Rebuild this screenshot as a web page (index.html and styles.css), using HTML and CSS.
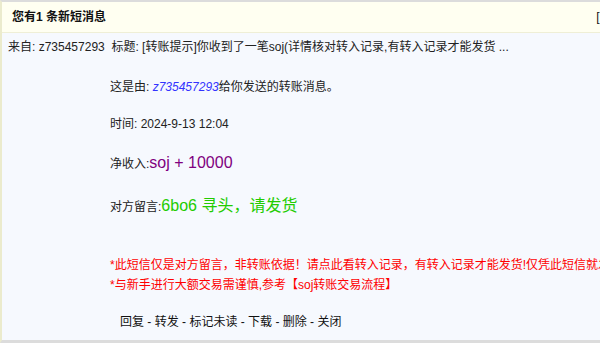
FILE: index.html
```html
<!DOCTYPE html>
<html lang="zh-CN">
<head>
  <meta charset="UTF-8">
  <title>短消息</title>
  <link rel="stylesheet" href="styles.css">
</head>
<body>
  <div class="msgbox">
    <div class="msg-head">
      <span class="msg-title">您有1 条新短消息</span>
      <a class="msg-close" href="#">[关闭]</a>
    </div>

    <div class="msg-from">来自: z735457293&nbsp;&nbsp;标题: [转账提示]你收到了一笔soj(详情核对转入记录,有转入记录才能发货 ...</div>

    <div class="msg-body">
      <div class="line l-first">这是由: <a class="user" href="#">z735457293</a>给你发送的转账消息。</div>
      <div class="line l-time">时间: 2024-9-13 12:04</div>
      <div class="line l-amount">净收入:<span class="amount">soj + 10000</span></div>
      <div class="line l-note">对方留言:<span class="note">6bo6 寻头，请发货</span></div>

      <div class="warn">
        <div class="line">*此短信仅是对方留言，非转账依据！请点此看转入记录，有转入记录才能发货!仅凭此短信就发货后果自负</div>
        <div class="line">*与新手进行大额交易需谨慎,参考<a href="#">【soj转账交易流程】</a></div>
      </div>

      <div class="line actions">
        <a href="#">回复</a> - <a href="#">转发</a> - <a href="#">标记未读</a> - <a href="#">下载</a> - <a href="#">删除</a> - <a href="#">关闭</a>
      </div>
    </div>
  </div>
</body>
</html>
```

FILE: styles.css
```css
html, body {
  margin: 0;
  padding: 0;
  overflow: hidden;
  background-color: #ffffff;
}

body {
  font-family: "Liberation Sans", Arial, "Noto Sans CJK SC", sans-serif;
  font-size: 12px;
  color: #222;
}

a {
  color: inherit;
  text-decoration: none;
}

.msgbox {
  width: 680px;
  height: 338px;
  border-top: 2px solid #dcdcdc;
  border-bottom: 3px solid #dcdcdc;
  border-left: 2px solid #ebebcd;
  background-color: #f6f9fe;
}

.msg-head {
  display: flex;
  justify-content: space-between;
  height: 30px;
  line-height: 30px;
  padding: 0 0 0 10px;
  background-color: #fffff1;
  border-bottom: 1px solid #efefd6;
}

.msg-title {
  font-weight: bold;
  color: #111;
}

.msg-close {
  margin-right: 55px;
  color: #111;
}

.msg-from {
  line-height: 20px;
  padding: 4px 0 0 6px;
  white-space: nowrap;
}

.msg-body {
  padding-left: 108px;
}

.line {
  line-height: 20px;
  white-space: nowrap;
}

.l-first {
  margin-top: 20px;
}

.l-time {
  margin-top: 17px;
}

.l-amount {
  margin-top: 19px;
}

.l-note {
  margin-top: 22px;
}

.user {
  color: #3333ff;
  font-style: italic;
}

.amount {
  font-size: 16px;
  color: #800080;
}

.note {
  font-size: 16px;
  color: #22cc00;
}

.warn {
  margin-top: 38px;
  color: #ff0000;
}

.actions {
  margin-top: 17px;
  padding-left: 10px;
  color: #111;
}
```
